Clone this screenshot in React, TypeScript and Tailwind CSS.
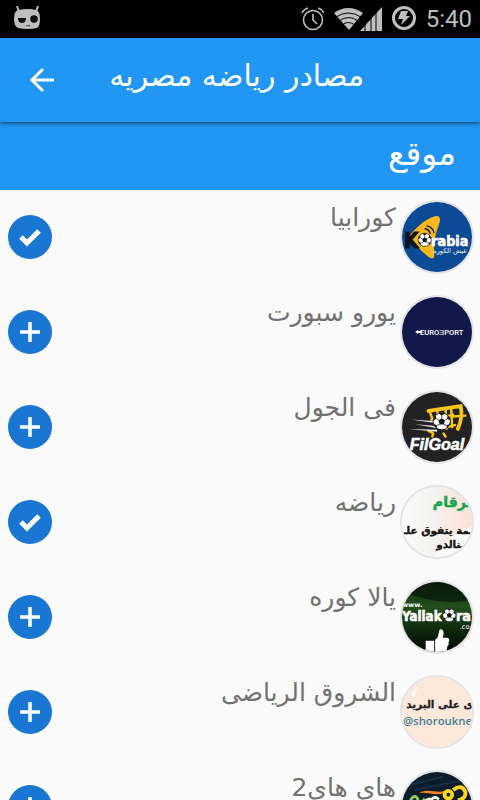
import React, { useState } from "react";

function Ball({ x, y, r }: { x: number; y: number; r: number }) {
  return (
    <g transform={`translate(${x} ${y}) scale(${r / 8})`}>
      <circle r="8" fill="#fff" stroke="#151515" strokeWidth="0.8" />
      <path d="M0-3 3-1 2 3h-4L-3-1zM-3-7.4 0-5.5 3-7.4 0-8zM7.8-1 5-2.5 5.6-5.6 7.4-3zM4.8 6.3 4.6 3.6 7.4 2.6 6.5 5zM-4.8 6.3-4.6 3.6-7.4 2.6-6.5 5zM-7.8-1-5-2.5-5.6-5.6-7.4-3z" fill="#151515" />
      <path d="M0-3v-3M3-1l2-1.5M2 3l2.6.8M-2 3l-2.6.8M-3-1l-2-1.5" stroke="#151515" strokeWidth="0.7" />
    </g>
  );
}

function KorabiaLogo() {
  return (
    <>
      <rect width="74" height="74" fill="#0b4a94" />
      <path d="M7 37C14 28 24 18 35 15c6-1 6 4 4 9-4 10-6 21-5 31 1 5-2 6-6 3-7-6-14-12-21-21z" fill="#f9b81b" />
      <path d="M24 28q5 1 6 6M26 25q7 2 8 8" stroke="#10121c" strokeWidth="1.5" fill="none" />
      <text x="2" y="49" fontSize="22" fontWeight="700" fill="#10121c" stroke="#10121c" strokeWidth="1" className="[font-family:'DejaVu_Sans_Condensed','DejaVu_Sans',sans-serif]">K</text>
      <Ball x={24} y={40} r={7} />
      <text x="31" y="46" fontSize="15" fontWeight="700" fill="#fff" stroke="#fff" strokeWidth="0.6" className="[font-family:'DejaVu_Sans_Condensed','DejaVu_Sans',sans-serif]">rabia</text>
      <text x="51" y="54" fontSize="7" textAnchor="middle" fill="#fff">عيش الكوره</text>
    </>
  );
}

function EurosportLogo() {
  return (
    <>
      <rect width="74" height="74" fill="#12184a" />
      <path d="M14 37l3-2v1h4v2h-4v1z" fill="#fff" />
      <text x="19" y="40" fontSize="8" fontWeight="500" fill="#fff" className="[font-family:Roboto,sans-serif]">EUROƎPORT</text>
    </>
  );
}

function FilGoalLogo() {
  return (
    <>
      <rect width="74" height="74" fill="#222" />
      <g fill="none" stroke="#f8c51c" strokeLinecap="round">
        <path d="M28 20l34-5c2 8 1 15-3 24" strokeWidth="4" />
        <path d="M29 20l3 8M37 18l1 6M46 17l1 22M31 29l23-5M52 17l1 20M54 26l13-1M28 41l4 2M33 44l-1 3M44 44l2 3M48 37l8-2" strokeWidth="2.6" />
      </g>
      <path d="M9 29l28 2v2zM14 34l22 2v2zM7 39l30 1v2z" fill="#e8e8e8" />
      <Ball x={42} y={31} r={9} />
      <text x="37" y="61" fontSize="17" fontWeight="700" fontStyle="italic" textAnchor="middle" fill="#fff" stroke="#fff" strokeWidth="0.6" className="[font-family:'Liberation_Sans',sans-serif]">FilGoal</text>
    </>
  );
}

function RiyadaLogo() {
  return (
    <>
      <defs>
        <linearGradient id="riyada" x1="0" x2="1" y1="0" y2="0">
          <stop offset="0" stopColor="#fbfbfb" />
          <stop offset="0.4" stopColor="#f4f3f1" />
          <stop offset="0.6" stopColor="#f8ede8" />
          <stop offset="1" stopColor="#f9e0d8" />
        </linearGradient>
      </defs>
      <rect width="74" height="74" fill="url(#riyada)" />
      <path d="M74 42Q50 48 34 74h40z" fill="#fcfcfa" />
      <path d="M74 55Q68 68 54 74h20z" fill="#a9d3b0" />
      <text x="53" y="21" fontSize="15" fontWeight="700" textAnchor="middle" fill="#14a84b" stroke="#14a84b" strokeWidth="0.5">ـرقام</text>
      <text x="38" y="50" fontSize="11" fontWeight="700" textAnchor="middle" fill="#171717" stroke="#171717" strokeWidth="0.4">ـمة يتفوق علـ</text>
      <text x="51" y="64" fontSize="11" fontWeight="700" textAnchor="middle" fill="#171717" stroke="#171717" strokeWidth="0.4">ـنالدو</text>
    </>
  );
}

function YallakoraLogo() {
  return (
    <>
      <defs>
        <linearGradient id="yalla" x1="0" x2="0" y1="0" y2="1">
          <stop offset="0" stopColor="#102b0e" />
          <stop offset="0.35" stopColor="#234f1b" />
          <stop offset="0.65" stopColor="#102b0e" />
          <stop offset="1" stopColor="#020902" />
        </linearGradient>
      </defs>
      <rect width="74" height="74" fill="url(#yalla)" />
      <path d="M0 9q34 17 74 10V0H0z" fill="#07170a" opacity="0.7" />
      <text x="0" y="26" fontSize="7" fontWeight="700" fill="#fff">www.</text>
      <text x="0" y="41" fontSize="14" fontWeight="700" fill="#fff" stroke="#fff" strokeWidth="0.6" className="[font-family:'DejaVu_Sans_Condensed','DejaVu_Sans',sans-serif]">Yallak</text>
      <Ball x={50} y={35} r={7} />
      <text x="57" y="41" fontSize="15" fontWeight="700" fill="#fff" stroke="#fff" strokeWidth="0.6" className="[font-family:'DejaVu_Sans_Condensed','DejaVu_Sans',sans-serif]">ra</text>
      <text x="61" y="50" fontSize="7" fill="#fff">.co</text>
      <path d="M25 62h9v12h-9zM35 61c4-2 3-6 5-11 4-1 5 4 3 9h5c3 1 2 4 1 5 1 2 0 3-1 4l-1 6H35z" fill="#fff" />
    </>
  );
}

function ShoroukLogo() {
  return (
    <>
      <rect width="74" height="74" fill="#fde8da" />
      <path d="M9 20q4-8 8-11l-4 13z" fill="#fff" opacity="0.8" />
      <text x="36" y="33" fontSize="11" fontWeight="700" textAnchor="middle" fill="#202025" stroke="#202025" strokeWidth="0.3">ى على البريد ا</text>
      <text x="1" y="51" fontSize="12" fontWeight="600" fill="#3f8095" className="[font-family:'Open_Sans',sans-serif]">@shoroukne</text>
    </>
  );
}

function HihiLogo() {
  return (
    <>
      <rect width="74" height="74" fill="#0b1c2b" />
      <path d="M8 14 43 5M13 19 68 8" stroke="#1b2e40" strokeWidth="2" />
      <path d="M18 22c12-6 20 3 32-4-8 10-20 3-32 4z" fill="#f58220" />
      <path d="M9 30c3-6 7-5 8 0s4 3 7-2" fill="none" stroke="#8fd05a" strokeWidth="3" />
      <path d="M24 32q3-5 7-3 4-4 8 0" fill="none" stroke="#e9f5df" strokeWidth="3" />
      <g fill="none" stroke="#ffd51e" strokeWidth="4">
        <circle cx="49" cy="24" r="4" />
        <path d="M54 19q9-7 13 2 1 7-8 9" />
      </g>
    </>
  );
}

const sources = [
  { name: "كورابيا", Logo: KorabiaLogo, added: true },
  { name: "يورو سبورت", Logo: EurosportLogo, added: false },
  { name: "فى الجول", Logo: FilGoalLogo, added: false },
  { name: "رياضه", Logo: RiyadaLogo, added: true },
  { name: "يالا كوره", Logo: YallakoraLogo, added: false },
  { name: "الشروق الرياضى", Logo: ShoroukLogo, added: false },
  { name: "هاى هاى2", Logo: HihiLogo, added: false },
];

function StatusBar() {
  return (
    <div dir="ltr" className="flex h-[38px] shrink-0 items-center bg-black pl-3.5 pr-2 text-[#bebebe]">
      <svg viewBox="0 0 28 26" className="h-[26px] w-7" aria-hidden="true">
        <path d="M3 0l2 6M24 0l-2 6" stroke="#bebebe" strokeWidth="2" />
        <path d="M4 4q10-2 18 0 4 1 4 9 0 7-3 9-9 2-19 0-4-2-4-9 0-8 4-9z" fill="#bebebe" />
        <circle cx="20" cy="13" r="3.8" fill="#111" />
        <path d="M4 12h8q0 5-4 5-4 0-4-5zM11 19q2 1 5 0v1q-3 1-5-1z" fill="#111" />
      </svg>
      <div className="flex-1" />
      <svg viewBox="0 0 24 24" className="mr-2 size-6" fill="none" stroke="#bebebe" strokeWidth="1.6" aria-hidden="true">
        <circle cx="13" cy="13" r="9.5" />
        <path d="M13 7v6l4 4M2 6q2-4 6-5M24 6q-2-4-6-5" />
      </svg>
      <svg viewBox="0 0 50 26" className="mr-2 h-[26px] w-[50px]" aria-hidden="true">
        <path d="M2 7Q16-3 31 7L17 24z" fill="#bebebe" />
        <path d="M4 11q12-8 25 0M7 15q10-7 19 0M10 19q6-5 13 0" fill="none" stroke="#000" strokeWidth="1" />
        <path d="M28 25 50 1v24z" fill="#bebebe" />
        <path d="M33 15v11M39 9v17M44 4v22" stroke="#000" strokeWidth="1" />
      </svg>
      <svg viewBox="0 0 26 26" className="mr-2.5 size-[26px]" aria-hidden="true">
        <circle cx="14" cy="12" r="10.5" fill="none" stroke="#bebebe" strokeWidth="3" />
        <path d="M11 5h7l-2 5h4l-9 9 2-6H8z" fill="#bebebe" />
      </svg>
      <span className="text-2xl [font-family:Roboto,sans-serif]">5:40</span>
    </div>
  );
}

export default function App() {
  const [added, setAdded] = useState(sources.map((s) => s.added));
  const toggle = (index: number) => setAdded(added.map((v, i) => (i === index ? !v : v)));

  return (
    <div dir="rtl" className="flex h-screen flex-col overflow-hidden bg-[#fafafa] [font-family:'DejaVu_Sans',sans-serif]">
      <StatusBar />
      <header className="relative flex h-[84px] shrink-0 items-center justify-between bg-[#2196f3] pl-6 pr-[116px] text-white shadow-[0_1px_4px_rgba(0,0,0,0.6)]">
        <h1 className="pb-2 text-[30px] leading-10 whitespace-nowrap">مصادر رياضه مصريه</h1>
        <button type="button" aria-label="رجوع" className="flex size-9 items-center justify-center">
          <svg viewBox="0 0 26 26" className="size-[26px]" fill="none" stroke="currentColor" strokeWidth="3" aria-hidden="true">
            <path d="M25 13H3M14 2 3 13l11 11" />
          </svg>
        </button>
      </header>
      <h2 className="flex h-[68px] shrink-0 items-center bg-[#2196f3] pb-1 pr-6 text-[33px] leading-10 text-white">موقع</h2>
      <ul className="min-h-0 flex-1 overflow-y-auto [scrollbar-width:none]">
        {sources.map(({ name, Logo }, i) => (
          <li key={name} className="flex h-[95px] items-start pl-2 pr-1.5 pt-2.5">
            <svg viewBox="0 0 74 74" className="size-[74px] shrink-0 rounded-full border-2 border-[#e4e4e8] [direction:ltr] [font-family:'DejaVu_Sans',sans-serif]" aria-hidden="true">
              <Logo />
            </svg>
            <span className="flex-1 pr-1 text-[25px] leading-9 text-[#717171]">{name}</span>
            <button
              type="button"
              aria-label={name}
              aria-pressed={added[i]}
              onClick={() => toggle(i)}
              className="mt-[15px] flex size-11 items-center justify-center rounded-full bg-[#1976d2] text-white"
            >
              <svg viewBox="0 0 22 22" className="size-[22px]" fill="none" stroke="currentColor" aria-hidden="true">
                {added[i] ? <path d="M2 11l6 6L20 5" strokeWidth="5" /> : <path d="M11 1v20M1 11h20" strokeWidth="3.5" />}
              </svg>
            </button>
          </li>
        ))}
      </ul>
    </div>
  );
}
